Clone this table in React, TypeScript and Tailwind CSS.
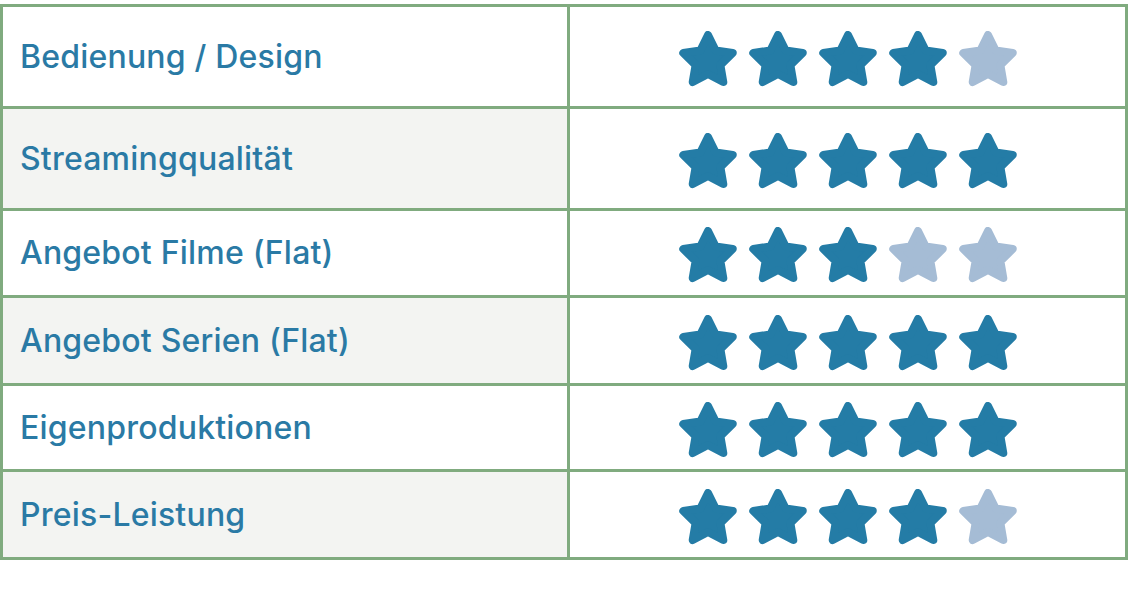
const rows: { label: string; stars: number; h: string; shaded: boolean }[] = [
  { label: "Bedienung / Design", stars: 4, h: "h-[99px]", shaded: false },
  { label: "Streamingqualität", stars: 5, h: "h-[102px]", shaded: true },
  { label: "Angebot Filme (Flat)", stars: 3, h: "h-[87px]", shaded: false },
  { label: "Angebot Serien (Flat)", stars: 5, h: "h-[88px]", shaded: true },
  { label: "Eigenproduktionen", stars: 5, h: "h-[86px]", shaded: false },
  { label: "Preis-Leistung", stars: 4, h: "h-[88px]", shaded: true },
];

function Star({ filled }: { filled: boolean }) {
  const c = filled ? "#247ca6" : "#a5bcd5";
  return (
    <svg width="58" height="56" viewBox="-29 -30 58 56">
      <polygon
        points="0,-26 7.64,-10.52 24.73,-8.03 12.36,4.02 15.28,21.03 0,13 -15.28,21.03 -12.36,4.02 -24.73,-8.03 -7.64,-10.52"
        fill={c}
        stroke={c}
        strokeWidth="8"
        strokeLinejoin="round"
      />
    </svg>
  );
}

export default function App() {
  return (
    <div className="w-[1128px] h-[605px] bg-white pt-[4px] font-['Inter',sans-serif]">
      <div className="border-[3px] border-[#80ab7f] flex flex-col">
        {rows.map((r, i) => (
          <div
            key={r.label}
            className={`flex ${r.h} ${i > 0 ? "border-t-[3px] border-[#80ab7f]" : ""}`}
          >
            <div
              className={`w-[567px] border-r-[3px] border-[#80ab7f] flex items-center pl-[17px] text-[32px] font-medium text-[#2a7aa5] tracking-[0.2px] ${
                r.shaded ? "bg-[#f3f4f2]" : "bg-white"
              }`}
            >
              {r.label}
            </div>
            <div className="flex-1 flex items-center justify-center gap-[12px] pt-[4px]">
              {[0, 1, 2, 3, 4].map((k) => (
                <Star key={k} filled={k < r.stars} />
              ))}
            </div>
          </div>
        ))}
      </div>
    </div>
  );
}
